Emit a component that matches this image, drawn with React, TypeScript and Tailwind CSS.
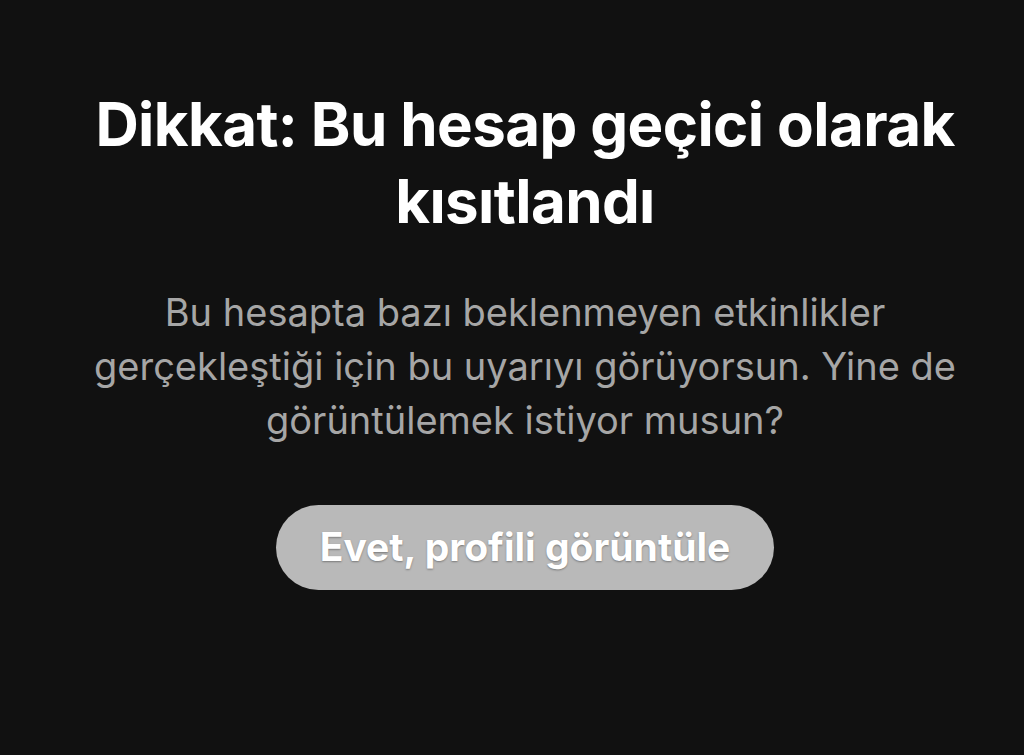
export default function App() {
  return (
    <div className="min-h-[755px] w-full bg-[#111111] pl-[56px] pr-[30px] pt-[86px]" style={{ fontFamily: "Inter, 'Noto Sans', sans-serif" }}>
      <div className="mx-auto flex max-w-[938px] flex-col items-center text-center">
        <h1 className="max-w-[880px] text-[60px] font-bold leading-[77px] tracking-[-0.01em] text-white">
          Dikkat: Bu hesap geçici olarak kısıtlandı
        </h1>
        <p className="mt-[45px] text-[38px] leading-[54px] text-[#a6a6a6]">
          Bu hesapta bazı beklenmeyen etkinlikler gerçekleştiği için bu uyarıyı görüyorsun. Yine de görüntülemek istiyor musun?
        </p>
        <button className="mt-[58px] h-[85px] w-[498px] rounded-full bg-[#b9b9b9] text-[39px] font-bold text-white [text-shadow:0_1px_2px_rgba(0,0,0,0.35)]">
          Evet, profili görüntüle
        </button>
      </div>
    </div>
  );
}
